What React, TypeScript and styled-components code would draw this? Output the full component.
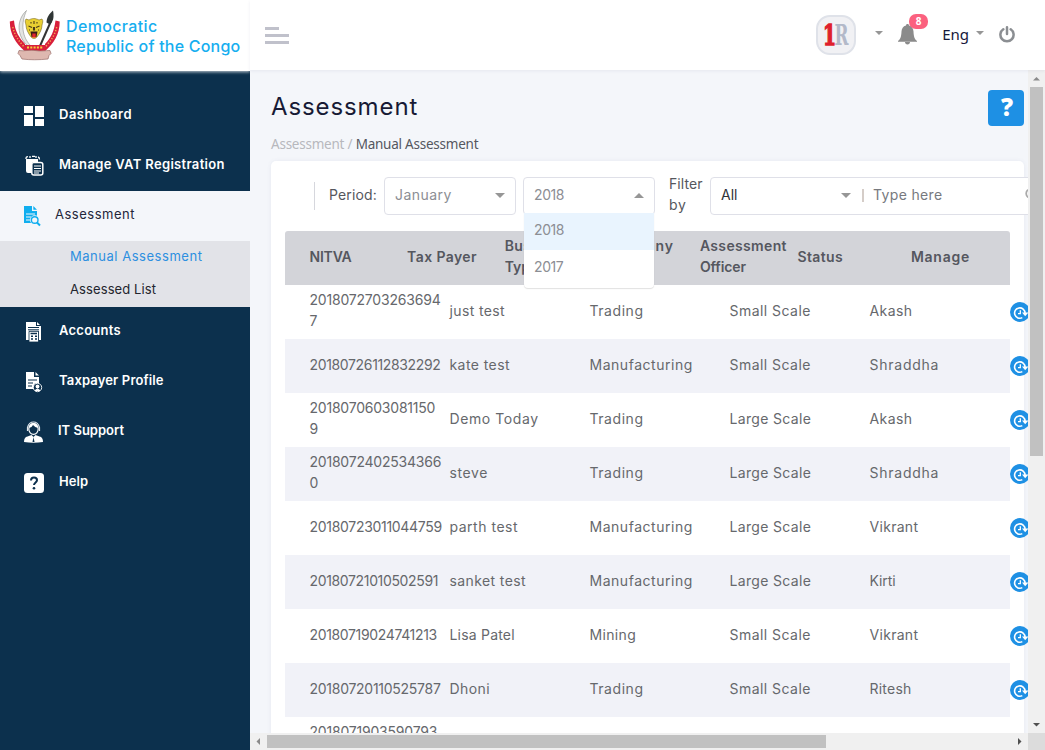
import React from 'react';
import styled, { createGlobalStyle } from 'styled-components';

const Global = createGlobalStyle`
  *, *::before, *::after { box-sizing: border-box; }
  html, body { margin: 0; padding: 0; overflow: hidden; }
  body { font-family: Inter, 'Open Sans', sans-serif; font-size: 14px; color: #62646a; background: #f4f6fa; }
`;

const Page = styled.div`
  display: grid;
  grid-template-columns: 250px 1fr;
  width: 1045px;
  height: 750px;
  overflow: hidden;
`;

const Text = styled.span<{ $ls?: number }>`
  letter-spacing: ${(p) => p.$ls ?? 0}px;
  white-space: nowrap;
`;

/* ---------- sidebar ---------- */
const Sidebar = styled.aside`
  background: #0c304d;
  display: flex;
  flex-direction: column;
`;
const Brand = styled.div`
  height: 71px;
  flex: none;
  background: #fff;
  box-shadow: 0 1px 3px rgba(255, 255, 255, 0.75);
  display: flex;
  align-items: flex-start;
  padding: 9px 0 0 9px;
`;
const BrandName = styled.div`
  display: flex;
  flex-direction: column;
  margin: 7px 0 0 5px;
  font-size: 16px;
  font-weight: 500;
  line-height: 20px;
  color: #16aeef;
`;
const Nav = styled.nav`
  padding-top: 20px;
`;
const NavItem = styled.a<{ $active?: boolean; $shift?: number }>`
  display: flex;
  align-items: center;
  height: 50px;
  padding: ${(p) => (p.$shift ?? 0) * 2}px 0 0 23px;
  font-size: 13px;
  font-weight: ${(p) => (p.$active ? 400 : 600)};
  color: ${(p) => (p.$active ? '#23263a' : '#fff')};
  background: ${(p) => (p.$active ? '#f4f6fa' : 'transparent')};
  svg { flex: none; margin-right: 14px; }
  span { margin-top: -4px; }
`;
const SubMenu = styled.div`
  background: #e2e3e8;
  height: 66px;
`;
const SubItem = styled.a<{ $active?: boolean }>`
  display: flex;
  align-items: center;
  height: 33px;
  padding: 0 0 3px 70px;
  font-size: 13px;
  color: ${(p) => (p.$active ? '#2d8fe0' : '#23252e')};
`;

/* ---------- header ---------- */
const Main = styled.div`
  display: flex;
  flex-direction: column;
  min-width: 0;
  height: 750px;
`;
const Header = styled.header`
  height: 70px;
  flex: none;
  background: #fff;
  box-shadow: 0 1px 3px rgba(60, 70, 110, 0.08);
  display: flex;
  align-items: center;
  padding: 0 30px 0 15px;
  z-index: 1;
`;
const Burger = styled.div`
  display: flex;
  flex-direction: column;
  gap: 4px;
  margin-right: auto;
`;
const Bar = styled.i<{ $w: number }>`
  height: 3px;
  width: ${(p) => p.$w}px;
  background: #c0c1cb;
`;
const Avatar = styled.div`
  width: 40px;
  height: 40px;
  margin-right: 19px;
  border: 2px solid #dfe2e9;
  border-radius: 14px;
  background: #f1f1f4;
  svg { display: block; }
`;
const Caret = styled.i<{ $up?: boolean; $size?: number }>`
  flex: none;
  border: ${(p) => p.$size ?? 4}px solid transparent;
  border-${(p) => (p.$up ? 'bottom' : 'top')}: ${(p) => p.$size ?? 4}px solid #969696;
  border-${(p) => (p.$up ? 'top' : 'bottom')}-width: 0;
`;
const HeaderCaret = styled(Caret)`
  margin-bottom: 4px;
`;
const BellBox = styled.div`
  position: relative;
  display: flex;
  margin: 0 25px 2px 15px;
`;
const Badge = styled.span`
  position: absolute;
  left: 11px;
  top: -10px;
  width: 19px;
  height: 15px;
  border-radius: 7px;
  background: #fb617f;
  color: #fff;
  font: 700 10px/15px 'Open Sans', sans-serif;
  text-align: center;
`;
const Lang = styled.div`
  display: flex;
  align-items: center;
  gap: 7px;
  margin: 0 15px 3px 0;
  font: 400 15px/20px 'Noto Sans', sans-serif;
  color: #16193a;
  i { margin-bottom: 1px; }
`;

/* ---------- scroll area ---------- */
const ScrollArea = styled.div`
  flex: 1;
  min-height: 0;
  display: grid;
  grid-template: 1fr 17px / 1fr 17px;
`;
const Viewport = styled.div`
  overflow: hidden;
  padding: 20px 0 0 21px;
  background: #f4f6fa;
`;
const Track = styled.div<{ $vertical?: boolean }>`
  display: flex;
  flex-direction: ${(p) => (p.$vertical ? 'column' : 'row')};
  align-items: center;
  background: #f0f0f0;
`;
const ArrowBox = styled.div`
  width: 17px;
  height: 17px;
  flex: none;
  display: flex;
  align-items: center;
  justify-content: center;
`;
const Thumb = styled.div<{ $w: number; $h: number }>`
  width: ${(p) => p.$w}px;
  height: ${(p) => p.$h}px;
  background: #c1c1c1;
  margin-bottom: auto;
`;
const HThumb = styled(Thumb)`
  margin: 0 auto 0 0;
`;
const Corner = styled.div`
  background: #dcdcdc;
`;

/* ---------- page head ---------- */
const TitleRow = styled.div`
  display: flex;
  justify-content: space-between;
  align-items: flex-start;
  width: 753px;
  height: 36px;
`;
const Title = styled.h1`
  margin: 0;
  font-size: 24px;
  line-height: 33px;
  font-weight: 400;
  color: #171a35;
`;
const HelpButton = styled.button`
  width: 36px;
  height: 36px;
  border: 0;
  border-radius: 4px;
  padding: 0 0 3px 2px;
  background: #1e90e4;
  color: #fff;
  font: 800 24px/33px 'Open Sans', sans-serif;
`;
const Crumbs = styled.div`
  margin-top: 8px;
  height: 27px;
  font: 400 13.5px/21px 'Noto Sans', sans-serif;
  color: #b7b8bd;
  b { font-weight: 400; color: #55575f; }
`;
const Card = styled.section`
  width: 753px;
  height: 900px;
  padding: 16px 14px 0;
  border-radius: 5px;
  background: #fff;
  box-shadow: 0 0 4px rgba(80, 90, 140, 0.08);
`;

/* ---------- filters ---------- */
const Filters = styled.div`
  display: flex;
  align-items: center;
  width: 860px;
  height: 38px;
  padding-left: 29px;
  margin-bottom: 16px;
`;
const Divider = styled.i`
  width: 1px;
  height: 28px;
  background: #d6d7dd;
  margin-right: 14px;
`;
const FilterLabel = styled.label<{ $w: number; $ml?: number }>`
  display: flex;
  flex-direction: column;
  width: ${(p) => p.$w}px;
  margin-left: ${(p) => p.$ml ?? 0}px;
  line-height: 21px;
  margin-top: -4px;
  color: #55575d;
`;
const Select = styled.div`
  position: relative;
  display: flex;
  align-items: center;
  justify-content: space-between;
  width: 132px;
  height: 38px;
  padding: 0 10px 2px;
  margin-right: 7px;
  border: 1px solid #dfe0e8;
  border-radius: 4px;
  background: #fff;
  color: #8c8e94;
  > span { margin-top: -2px; }
`;
const Menu = styled.div`
  position: absolute;
  left: 0;
  top: 35px;
  width: 130px;
  height: 75px;
  border-radius: 0 0 4px 4px;
  background: #fff;
  box-shadow: 0 1px 1px rgba(0, 0, 0, 0.12);
  z-index: 2;
`;
const Option = styled.div<{ $selected?: boolean }>`
  height: 37px;
  line-height: 34px;
  padding-left: 10px;
  background: ${(p) => (p.$selected ? '#e9f4fe' : 'transparent')};
`;
const SearchGroup = styled.div`
  display: flex;
  align-items: center;
  width: 345px;
  height: 38px;
  padding: 0 10px 2px;
  border: 1px solid #dfe0e8;
  border-radius: 4px;
  background: #fff;
`;
const FieldValue = styled.span`
  width: 120px;
  margin-top: -2px;
  color: #303238;
`;
const Pipe = styled.i`
  width: 2px;
  height: 13px;
  margin: 0 9px 0 11px;
  background: #d5cdc8;
`;
const Placeholder = styled.span`
  width: 152px;
  margin-top: -2px;
  color: #77797e;
`;

/* ---------- table ---------- */
const HeadRow = styled.div`
  display: flex;
  align-items: center;
  width: 725px;
  height: 54px;
  padding-left: 24.5px;
  border-radius: 3px 3px 0 0;
  background: #d3d4d9;
  color: #55575f;
  font-size: 14px;
  font-weight: 600;
  line-height: 21px;
`;
const HeadCell = styled.div<{ $w?: number; $center?: boolean }>`
  display: flex;
  flex-direction: column;
  flex: none;
  width: ${(p) => p.$w ?? 97.6}px;
  padding-bottom: 4px;
  ${(p) => p.$center && 'align-items: center;'}
`;
const Row = styled.div<{ $shade?: boolean }>`
  display: flex;
  align-items: center;
  width: 725px;
  height: 54px;
  padding-left: 24.5px;
  background: ${(p) => (p.$shade ? '#f1f2f8' : '#fff')};
  color: #66686c;
  line-height: 21px;
`;
const Cell = styled.div`
  display: flex;
  flex-direction: column;
  flex: none;
  width: 140px;
  padding-bottom: 4px;
`;
const Action = styled.div`
  flex: none;
  display: flex;
  margin-left: 0.5px;
`;

/* ---------- drawings ---------- */
const Emblem = () => (
  <svg width="52" height="52" viewBox="0 0 52 52">
    <path d="M17.500 1.500C8 10 6 27 21 39l2-1C12 28 12 14 17.500 1.500z" fill="#e3e4e2" stroke="#8e908e" strokeWidth=".6" />
    <path d="M31 37 42 12" stroke="#333" strokeWidth="2" />
    <path d="M37.500 13.500c0-5 3-9 6.500-12 1 5 1 10-3 14z" fill="#2f3535" />
    <path d="M17 10l3 1c3-2 6-2 10 0l3-1c1.500 2 .5 4 0 6 0 4-2 8-5 12-2 2-4 2-6 0-3-4-5-8-5-12-.5-2-1.500-4 0-6z" fill="#e8cf32" stroke="#7c6a20" strokeWidth=".6" />
    <path d="M19.500 17l3.500 1.500M30.500 17 27 18.500M22 13v1.500M28 13v1.500M25 12v3M20 21h1M29 21h1M24.500 18v3h1v-3" stroke="#493b18" strokeWidth="1.100" fill="none" />
    <path d="M21.500 22.500h7l-1 5.500h-5z" fill="#3d1b14" />
    <path d="M23.300 24.500h3.400v4h-3.400z" fill="#e4262e" />
    <path d="M.8 12.500 5 11.500c1 11 5 17 11 23.500v1h20v-1c6-6 9-12.500 10.500-23.500l4.200 1c0 13-6 22-14.500 29.500H15.500C7 34.500.8 25.500.8 12.500z" fill="#d81e3b" />
    <path d="M3.800 18c2 9 6 14 11.500 20M47.700 18c-2 9-6 14-11.500 20" fill="none" stroke="#f3a650" strokeWidth="1.500" strokeDasharray="1.300 1.700" />
    <path d="M18 38.500h16" stroke="#f7cf3c" strokeWidth="2" strokeDasharray="2 1.300" />
    <path d="M10 41.500c5 1 11-1 16 0s11 0 15 0l1 3-2 2-1 3.500c-9 1-18 1-26 0l-2-3.500-2-2z" fill="#deb8b0" stroke="#9a6d68" strokeWidth=".7" />
  </svg>
);

const LogoMark = () => (
  <svg width="36" height="36" viewBox="0 0 36 36" fontFamily="'DejaVu Serif', serif" fontWeight="700" fontSize="28">
    <text x="16.500" y="28" textLength="14" lengthAdjust="spacingAndGlyphs" fill="#b3b9c9">R</text>
    <text x="5" y="28" textLength="13" lengthAdjust="spacingAndGlyphs" fill="#df1f2d" stroke="#df1f2d" strokeWidth="1.500">1</text>
  </svg>
);

const Bell = () => (
  <svg width="19" height="21" viewBox="0 0 19 21">
    <path d="M9.500 0c1 0 1.500.7 1.500 1.500 3 .8 4.300 3 4.500 6 .2 5 1 7.500 3.500 9.500v.8H0V17c2.500-2 3.300-4.500 3.500-9.500.2-3 1.500-5.200 4.500-6C8 .7 8.500 0 9.500 0zM7 18h5c0 1.500-1 2.500-2.500 2.500S7 19.500 7 18z" fill="#8b8b8b" />
  </svg>
);

const Power = () => (
  <svg width="16" height="19" viewBox="0 0 16 19" fill="none" stroke="#8b8e92" strokeWidth="2.500" strokeLinecap="round">
    <path d="M8 1.300V8M4.300 3.300a6.600 6.600 0 1 0 7.400 0" />
  </svg>
);

const DashboardIcon = () => (
  <svg width="22" height="22" viewBox="0 0 22 22" fill="#fff">
    <path d="M1 1h9v7H1zM12 1h9v11h-9zM1 10h9v11H1zM12 14h9v7h-9z" />
  </svg>
);

const ClipboardIcon = () => (
  <svg width="22" height="22" viewBox="0 1 22 22">
    <path d="M3 5h12v3H9v11H5a2 2 0 0 1-2-2z" fill="#fff" />
    <path d="M3 5V4q0-1.300 2-1.300M7 2v2M9 2.300h3M13 2v2M15 3q1.500.3 1.500 2.500" stroke="#fff" fill="none" strokeWidth="1.300" />
    <rect x="8.800" y="8.500" width="11" height="12.600" rx="2" fill="#0c304d" stroke="#fff" strokeWidth="1.500" />
    <path d="M11 12h7M11 14.500h7M11 17h7M11 19h5" stroke="#fff" strokeWidth="1.200" />
  </svg>
);

const AssessmentIcon = () => (
  <svg width="18" height="22" viewBox="0 0 18 22">
    <path d="M1 1h8v5h5v5.500L8 12v6H1z" fill="#10aeef" />
    <path d="M10.300 1v3.700H14z" fill="#10aeef" />
    <path d="M3 9h9M3 12h5M3 15h4" stroke="#f4f6fa" strokeWidth="1.200" />
    <circle cx="11.700" cy="15" r="4.700" fill="#f4f6fa" />
    <circle cx="11.700" cy="15" r="3.300" fill="none" stroke="#10aeef" strokeWidth="1.400" />
    <path d="M14 17.500l3 3" stroke="#10aeef" strokeWidth="2" />
  </svg>
);

const AccountsIcon = () => (
  <svg width="22" height="22" viewBox="0 0 22 22">
    <path d="M3 1h10v4h5v14h-2v-9H6v9H3z" fill="#fff" />
    <path d="M14 1v3h3z" fill="#fff" />
    <path d="M5 6.500h11M5 8.800h11" stroke="#0c304d" />
    <path d="M6 10.300h9.500V21H6z" fill="#fff" stroke="#0c304d" strokeWidth=".8" />
    <path d="M7.500 12.500h6.500M8 15.300h2M12 15.300h2M8 18h2M12 18h2" stroke="#0c304d" strokeWidth="1.400" />
  </svg>
);

const ProfileIcon = () => (
  <svg width="22" height="22" viewBox="0 0 22 22">
    <path d="M3 1h8v5h5v6l-5 1v5H3z" fill="#fff" />
    <path d="M12.500 1v3.500H16z" fill="#fff" />
    <path d="M5 9h9M5 12h5M5 15h4" stroke="#0c304d" strokeWidth="1.200" />
    <circle cx="14.500" cy="16.500" r="4.200" fill="#0c304d" stroke="#fff" strokeWidth=".9" />
    <circle cx="14.500" cy="15.500" r="1.900" fill="#fff" />
    <path d="M12 19.500q2.500-3 5 0z" fill="#fff" stroke="#fff" />
  </svg>
);

const SupportIcon = () => (
  <svg width="21" height="22" viewBox="0 0 21 22">
    <ellipse cx="10.500" cy="8" rx="4.700" ry="5.400" fill="none" stroke="#fff" strokeWidth="1.200" />
    <path d="M4.500 10V6.500Q6 1 10.500 1t6 5.500V10" fill="none" stroke="#dfe6ec" strokeWidth="1.200" />
    <path d="M6 7q3-.5 4-3 2 2.500 5 3-.5-5-4.500-5T6 7z" fill="#fff" />
    <path d="M1 21q0-5 3.500-5.500l4-1.500 2 2 2-2 4 1.500Q20 16 20 21q-9.500 1.500-19 0z" fill="#fff" />
    <path d="M10.500 16l-1 5h2z" fill="#0c304d" />
  </svg>
);

const HelpIcon = () => (
  <svg width="22" height="22" viewBox="0 0 22 22">
    <rect x="1" y="1" width="20" height="20" rx="3.500" fill="#fff" />
    <path d="M8 8.500C8 6.500 9.300 5.600 11 5.600s3 1 3 2.700c0 2-3 2.300-3 4.700" fill="none" stroke="#0c304d" strokeWidth="2" />
    <circle cx="11" cy="16.200" r="1.300" fill="#0c304d" />
  </svg>
);

const RenewIcon = () => (
  <svg width="20" height="20" viewBox="0 0 20 20">
    <circle cx="10" cy="10" r="10" fill="#1e90e4" />
    <path d="M12.300 15.600A5.200 5.200 0 1 1 15 11" fill="none" stroke="#fff" strokeWidth="1.600" />
    <path d="M12 10.600h6.400l-3.200 3.600z" fill="#fff" />
    <path d="M10.300 8.300v3.300H8" fill="none" stroke="#fff" strokeWidth="1.300" />
  </svg>
);

type ArrowProps = { d: string; color: string };
const ScrollArrow = ({ d, color }: ArrowProps) => (
  <ArrowBox>
    <svg width="9" height="9" viewBox="0 0 9 9"><path d={d} fill={color} /></svg>
  </ArrowBox>
);

/* ---------- data: each text with its tracking ---------- */
type T = [string, number?];
const trading: T = ['Trading', 0.55];
const manufacturing: T = ['Manufacturing', 0.53];
const mining: T = ['Mining', 0.35];
const small: T = ['Small Scale', 0.46];
const large: T = ['Large Scale', 0.34];
const akash: T = ['Akash', 0.4];
const shraddha: T = ['Shraddha', 0.75];
const vikrant: T = ['Vikrant', 0.3];

const rows: { id: T[]; cells: T[] }[] = [
  { id: [['2018072703263694', -0.2], ['7']], cells: [['just test', 0.38], trading, small, akash] },
  { id: [['20180726112832292', -0.35]], cells: [['kate test', 0.42], manufacturing, small, shraddha] },
  { id: [['2018070603081150', -0.22], ['9']], cells: [['Demo Today', 0.58], trading, large, akash] },
  { id: [['2018072402534366', -0.22], ['0']], cells: [['steve', 0.6], trading, large, shraddha] },
  { id: [['20180723011044759', -0.3]], cells: [['parth test', 0.52], manufacturing, large, vikrant] },
  { id: [['20180721010502591', -0.35]], cells: [['sanket test', 0.4], manufacturing, large, ['Kirti', -0.1]] },
  { id: [['20180719024741213', -0.35]], cells: [['Lisa Patel', 0.2], mining, small, vikrant] },
  { id: [['20180720110525787', -0.27]], cells: [['Dhoni', 0.4], trading, small, ['Ritesh', 0.22]] },
  { id: [['2018071903590793', -0.2], ['2']], cells: [] },
];

export default function App() {
  return (
    <>
      <Global />
      <Page>
        <Sidebar>
          <Brand>
            <Emblem />
            <BrandName>
              <Text $ls={0.35}>Democratic</Text>
              <Text $ls={0.22}>Republic of the Congo</Text>
            </BrandName>
          </Brand>
          <Nav>
            <NavItem><DashboardIcon /><Text $ls={0.5}>Dashboard</Text></NavItem>
            <NavItem><ClipboardIcon /><Text $ls={0.33}>Manage VAT Registration</Text></NavItem>
            <NavItem $active><AssessmentIcon /><Text $ls={0.5}>Assessment</Text></NavItem>
            <SubMenu>
              <SubItem $active><Text $ls={0.53}>Manual Assessment</Text></SubItem>
              <SubItem><Text $ls={0.1}>Assessed List</Text></SubItem>
            </SubMenu>
            <NavItem><AccountsIcon /><Text $ls={0.25}>Accounts</Text></NavItem>
            <NavItem><ProfileIcon /><Text $ls={0.15}>Taxpayer Profile</Text></NavItem>
            <NavItem><SupportIcon /><Text>IT Support</Text></NavItem>
            <NavItem $shift={1}><HelpIcon /><Text $ls={0.1}>Help</Text></NavItem>
          </Nav>
        </Sidebar>
        <Main>
          <Header>
            <Burger><Bar $w={14} /><Bar $w={24} /><Bar $w={24} /></Burger>
            <Avatar><LogoMark /></Avatar>
            <HeaderCaret />
            <BellBox><Bell /><Badge>8</Badge></BellBox>
            <Lang><Text>Eng</Text><Caret /></Lang>
            <Power />
          </Header>
          <ScrollArea>
            <Viewport>
              <TitleRow>
                <Title><Text $ls={0.9}>Assessment</Text></Title>
                <HelpButton>?</HelpButton>
              </TitleRow>
              <Crumbs><Text $ls={-0.23}>Assessment / <b>Manual Assessment</b></Text></Crumbs>
              <Card>
                <Filters>
                  <Divider />
                  <FilterLabel $w={55}><Text $ls={0.15}>Period:</Text></FilterLabel>
                  <Select><Text $ls={0.45}>January</Text><Caret $size={5} /></Select>
                  <Select>
                    <Text $ls={-0.4}>2018</Text><Caret $up $size={5} />
                    <Menu>
                      <Option $selected><Text $ls={-0.4}>2018</Text></Option>
                      <Option><Text $ls={-0.4}>2017</Text></Option>
                    </Menu>
                  </Select>
                  <FilterLabel $w={41} $ml={7}><Text $ls={0.1}>Filter</Text><Text $ls={0.8}>by</Text></FilterLabel>
                  <SearchGroup>
                    <FieldValue><Text>All</Text></FieldValue>
                    <Caret $size={5} />
                    <Pipe />
                    <Placeholder><Text $ls={0.35}>Type here</Text></Placeholder>
                    <svg width="14" height="14" viewBox="0 0 14 14" fill="none" stroke="#a9a9a9" strokeWidth="1.800">
                      <circle cx="5.500" cy="5.500" r="4.300" /><path d="M8.700 8.700l4 4" />
                    </svg>
                  </SearchGroup>
                </Filters>
                <HeadRow>
                  <HeadCell><Text $ls={-0.2}>NITVA</Text></HeadCell>
                  <HeadCell><Text $ls={0.4}>Tax Payer</Text></HeadCell>
                  <HeadCell><Text $ls={0.4}>Business</Text><Text>Type</Text></HeadCell>
                  <HeadCell><Text $ls={0.95}>Company</Text><Text>Type</Text></HeadCell>
                  <HeadCell><Text $ls={0.35}>Assessment</Text><Text $ls={-0.1}>Officer</Text></HeadCell>
                  <HeadCell $w={84}><Text $ls={0.35}>Status</Text></HeadCell>
                  <HeadCell $w={118} $center><Text $ls={0.75}>Manage</Text></HeadCell>
                </HeadRow>
                {rows.map((r, i) => (
                  <Row key={i} $shade={i % 2 === 1}>
                    <Cell>{r.id.map(([t, ls]) => <Text key={t} $ls={ls}>{t}</Text>)}</Cell>
                    {r.cells.map(([t, ls], j) => <Cell key={j}><Text $ls={ls}>{t}</Text></Cell>)}
                    {r.cells.length > 0 && <Action><RenewIcon /></Action>}
                  </Row>
                ))}
              </Card>
            </Viewport>
            <Track $vertical>
              <ScrollArrow d="M1 6.500h7L4.500 3z" color="#8a8a8a" />
              <Thumb $w={13} $h={369} />
              <ScrollArrow d="M1 3h7L4.500 6.500z" color="#505050" />
            </Track>
            <Track>
              <ScrollArrow d="M6 1v7L2.500 4.500z" color="#8a8a8a" />
              <HThumb $w={559} $h={13} />
              <ScrollArrow d="M3 1v7l3.500-3.500z" color="#505050" />
            </Track>
            <Corner />
          </ScrollArea>
        </Main>
      </Page>
    </>
  );
}
